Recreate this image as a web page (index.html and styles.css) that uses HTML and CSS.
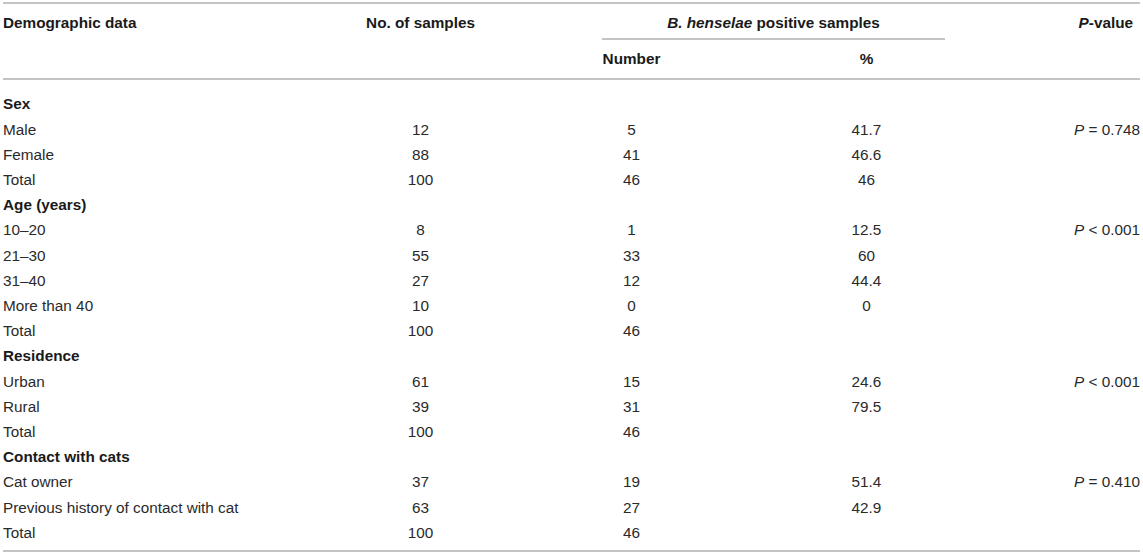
FILE: index.html
```html
<!DOCTYPE html>
<html lang="en">

<head>
    <meta charset="UTF-8" />
    <meta name="viewport" content="width=device-width, initial-scale=1.0" />
    <title>B. henselae positive samples by demographic data</title>
    <link rel="stylesheet" href="styles.css">
</head>

<body>

    <table class="data-table">
        <colgroup>
            <col class="col-label">
            <col class="col-samples">
            <col class="col-number">
            <col class="col-percent">
            <col class="col-pvalue">
        </colgroup>
        <thead>
            <tr class="head-top">
                <th rowspan="2" class="label">Demographic data</th>
                <th rowspan="2" class="samples">No. of samples</th>
                <th colspan="2" class="group-head"><span class="group-rule"><i>B. henselae</i> positive samples</span></th>
                <th rowspan="2" class="pvalue"><i>P</i>-value</th>
            </tr>
            <tr class="head-sub">
                <th class="number">Number</th>
                <th class="percent">%</th>
            </tr>
        </thead>
        <tbody>
            <tr class="section first">
                <td class="label">Sex</td><td></td><td></td><td></td><td></td>
            </tr>
            <tr>
                <td class="label">Male</td><td class="samples">12</td><td class="number">5</td><td class="percent">41.7</td><td class="pvalue"><i>P</i> = 0.748</td>
            </tr>
            <tr>
                <td class="label">Female</td><td class="samples">88</td><td class="number">41</td><td class="percent">46.6</td><td></td>
            </tr>
            <tr>
                <td class="label">Total</td><td class="samples">100</td><td class="number">46</td><td class="percent">46</td><td></td>
            </tr>

            <tr class="section">
                <td class="label">Age (years)</td><td></td><td></td><td></td><td></td>
            </tr>
            <tr>
                <td class="label">10–20</td><td class="samples">8</td><td class="number">1</td><td class="percent">12.5</td><td class="pvalue"><i>P</i> &lt; 0.001</td>
            </tr>
            <tr>
                <td class="label">21–30</td><td class="samples">55</td><td class="number">33</td><td class="percent">60</td><td></td>
            </tr>
            <tr>
                <td class="label">31–40</td><td class="samples">27</td><td class="number">12</td><td class="percent">44.4</td><td></td>
            </tr>
            <tr>
                <td class="label">More than 40</td><td class="samples">10</td><td class="number">0</td><td class="percent">0</td><td></td>
            </tr>
            <tr>
                <td class="label">Total</td><td class="samples">100</td><td class="number">46</td><td></td><td></td>
            </tr>

            <tr class="section">
                <td class="label">Residence</td><td></td><td></td><td></td><td></td>
            </tr>
            <tr>
                <td class="label">Urban</td><td class="samples">61</td><td class="number">15</td><td class="percent">24.6</td><td class="pvalue"><i>P</i> &lt; 0.001</td>
            </tr>
            <tr>
                <td class="label">Rural</td><td class="samples">39</td><td class="number">31</td><td class="percent">79.5</td><td></td>
            </tr>
            <tr>
                <td class="label">Total</td><td class="samples">100</td><td class="number">46</td><td></td><td></td>
            </tr>

            <tr class="section">
                <td class="label">Contact with cats</td><td></td><td></td><td></td><td></td>
            </tr>
            <tr>
                <td class="label">Cat owner</td><td class="samples">37</td><td class="number">19</td><td class="percent">51.4</td><td class="pvalue"><i>P</i> = 0.410</td>
            </tr>
            <tr>
                <td class="label">Previous history of contact with cat</td><td class="samples">63</td><td class="number">27</td><td class="percent">42.9</td><td></td>
            </tr>
            <tr class="last">
                <td class="label">Total</td><td class="samples">100</td><td class="number">46</td><td></td><td></td>
            </tr>
        </tbody>
    </table>

</body>

</html>
```

FILE: styles.css
```css
body {
    font-family: "Liberation Sans", Arial, sans-serif;
    font-size: 15.3px;
    color: #2a2a2a;
    background: #fff;
    margin: 0;
    padding: 2px 3px 0;
}

.data-table {
    width: 1137px;
    table-layout: fixed;
    border-collapse: collapse;
    border-top: 2px solid #c4c4c4;
    border-bottom: 2px solid #c4c4c4;
    line-height: 17.2px;
}

.col-label {
    width: 357px;
}

.col-samples {
    width: 241px;
}

.col-number {
    width: 61px;
}

.col-percent {
    width: 283px;
}

.col-pvalue {
    width: 195px;
}

th,
td {
    padding: 4px 0;
    font-weight: normal;
}

th {
    font-weight: bold;
    color: #1a1a1a;
    vertical-align: top;
}

thead tr.head-sub th {
    border-bottom: 2px solid #c4c4c4;
}

thead th[rowspan] {
    border-bottom: 2px solid #c4c4c4;
}

.head-top th {
    padding-top: 10px;
    padding-bottom: 0;
}

.head-top .group-head {
    padding-bottom: 0;
}

.group-rule {
    display: block;
    padding-bottom: 7px;
    margin-left: 1px;
    border-bottom: 2px solid #c4c4c4;
}

.head-sub th {
    padding-top: 10px;
    padding-bottom: 11px;
}

.label {
    text-align: left;
}

.samples {
    text-align: center;
    padding-right: 120px;
}

.number {
    text-align: center;
}

.percent {
    text-align: center;
    padding-left: 126px;
}

.pvalue {
    text-align: right;
}

th.pvalue {
    padding-right: 7px;
}

.group-head {
    text-align: center;
}

.section .label {
    font-weight: bold;
    color: #1a1a1a;
}

tr.first td {
    padding-top: 15px;
}

tr.last td {
    padding-bottom: 9px;
}
```
